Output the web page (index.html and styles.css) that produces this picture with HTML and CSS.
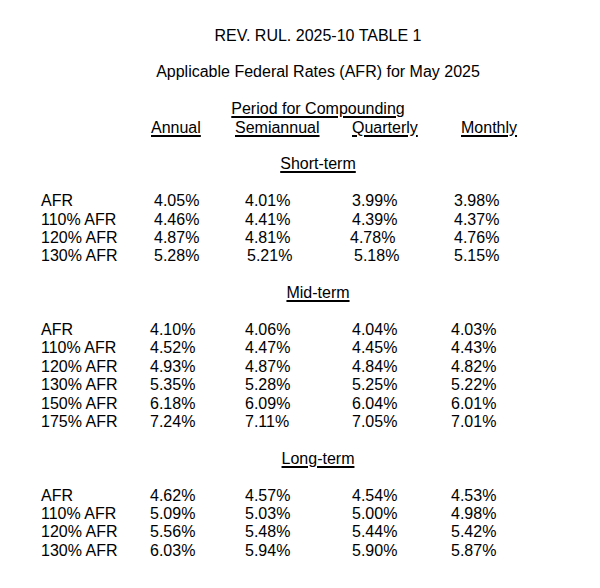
FILE: index.html
```html
<!DOCTYPE html>
<html lang="en">
<head>
<meta charset="utf-8">
<title>REV. RUL. 2025-10 TABLE 1</title>
<link rel="stylesheet" href="styles.css">
</head>
<body>
<main class="page">
  <h1 class="center line">REV. RUL. 2025-10 TABLE 1</h1>
  <p class="center line gap">Applicable Federal Rates (AFR) for May 2025</p>
  <p class="center line gap"><u>Period for Compounding</u></p>
  <div class="colhead line">
    <u>Annual</u><u>Semiannual</u><u>Quarterly</u><u>Monthly</u>
  </div>

  <h2 class="center line gap"><u>Short-term</u></h2>
  <div class="rates short gap">
    <span>AFR</span><span>4.05%</span><span>4.01%</span><span>3.99%</span><span>3.98%</span>
    <span>110% AFR</span><span>4.46%</span><span>4.41%</span><span>4.39%</span><span>4.37%</span>
    <span>120% AFR</span><span>4.87%</span><span>4.81%</span><span class="nm2">4.78%</span><span class="nm1">4.76%</span>
    <span>130% AFR</span><span>5.28%</span><span class="np2">5.21%</span><span class="np2">5.18%</span><span class="np3">5.15%</span>
  </div>

  <h2 class="center line gap"><u>Mid-term</u></h2>
  <div class="rates gap">
    <span>AFR</span><span>4.10%</span><span>4.06%</span><span>4.04%</span><span>4.03%</span>
    <span>110% AFR</span><span>4.52%</span><span>4.47%</span><span>4.45%</span><span>4.43%</span>
    <span>120% AFR</span><span>4.93%</span><span>4.87%</span><span>4.84%</span><span>4.82%</span>
    <span>130% AFR</span><span>5.35%</span><span>5.28%</span><span>5.25%</span><span>5.22%</span>
    <span>150% AFR</span><span>6.18%</span><span>6.09%</span><span>6.04%</span><span>6.01%</span>
    <span>175% AFR</span><span>7.24%</span><span>7.11%</span><span>7.05%</span><span>7.01%</span>
  </div>

  <h2 class="center line gap"><u>Long-term</u></h2>
  <div class="rates gap">
    <span>AFR</span><span>4.62%</span><span>4.57%</span><span>4.54%</span><span>4.53%</span>
    <span>110% AFR</span><span>5.09%</span><span>5.03%</span><span>5.00%</span><span>4.98%</span>
    <span>120% AFR</span><span>5.56%</span><span>5.48%</span><span>5.44%</span><span>5.42%</span>
    <span>130% AFR</span><span>6.03%</span><span>5.94%</span><span>5.90%</span><span>5.87%</span>
  </div>
</main>
</body>
</html>
```

FILE: styles.css
```css
html, body {
  margin: 0;
  padding: 0;
  background: #ffffff;
}

body {
  font-family: "Liberation Sans", Arial, sans-serif;
  font-size: 16px;
  line-height: 18.4px;
  color: #000000;
}

.page {
  padding-top: 26.5px;
}

.line {
  margin: 0;
  font-size: 16px;
  font-weight: normal;
  line-height: 18.4px;
}

.center {
  margin-left: 36px;
  text-align: center;
}

.gap {
  margin-top: 18.4px;
}

u {
  text-decoration: underline;
  text-decoration-thickness: 1.5px;
  text-underline-offset: 1.5px;
}

.colhead {
  display: grid;
  grid-template-columns: 84px 117px 109px auto;
  margin-left: 151px;
}

.colhead u {
  justify-self: start;
}

.rates {
  display: grid;
  grid-template-columns: 109px 95px 107px 99px auto;
  margin-left: 41px;
  line-height: 18.4px;
  white-space: nowrap;
}

.short span:nth-child(5n+2) {
  padding-left: 4px;
}

.short span:nth-child(5n) {
  padding-left: 3px;
}

.short .nm2 {
  padding-left: 0;
  margin-left: -2px;
}

.short .nm1 {
  padding-left: 2px;
}

.short .np2 {
  padding-left: 2px;
}

.short .np3 {
  padding-left: 6px;
}
```
